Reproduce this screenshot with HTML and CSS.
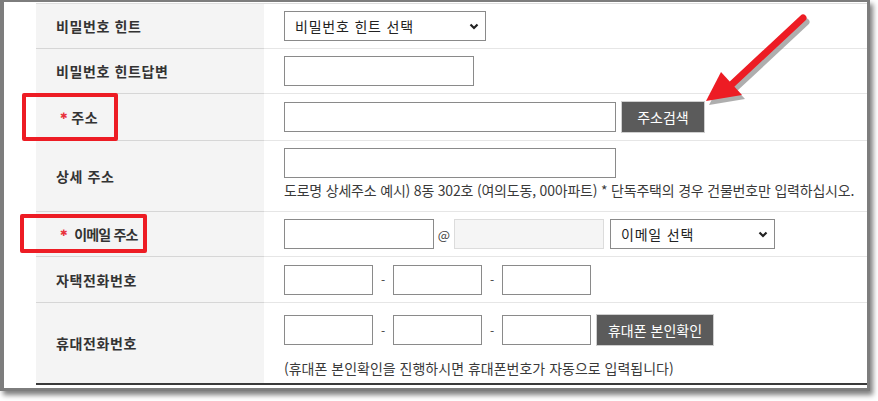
FILE: index.html
```html
<!DOCTYPE html>
<html lang="ko">
<head>
    <meta charset="UTF-8">
    <meta name="viewport" content="width=device-width, initial-scale=1.0">
    <title>회원정보 입력</title>
    <link rel="stylesheet" href="styles.css">
</head>
<body>
    <div class="window">
        <div class="form-table">
            <div class="row">
                <div class="label-cell">비밀번호 힌트</div>
                <div class="value-cell">
                    <div class="line">
                        <span class="select-wrap">
                            <select class="select hint-select">
                                <option>비밀번호 힌트 선택</option>
                            </select>
                            <svg class="chevron" width="10" height="7" viewBox="0 0 10 7"><polyline points="1.5,1.5 5,5 8.5,1.5" fill="none" stroke="#222" stroke-width="2.2"/></svg>
                        </span>
                    </div>
                </div>
            </div>
            <div class="row">
                <div class="label-cell">비밀번호 힌트답변</div>
                <div class="value-cell">
                    <div class="line"><input class="input w-190" type="text"></div>
                </div>
            </div>
            <div class="row row-addr">
                <div class="label-cell"><span class="req">✱</span>주소</div>
                <div class="value-cell">
                    <div class="line">
                        <input class="input w-332" type="text">
                        <button class="btn btn-addr" type="button">주소검색</button>
                    </div>
                </div>
            </div>
            <div class="row row-detail">
                <div class="label-cell">상세 주소</div>
                <div class="value-cell top">
                    <div class="line"><input class="input w-332" type="text"></div>
                    <p class="help help-detail">도로명 상세주소 예시) 8동 302호 (여의도동, 00아파트) * 단독주택의 경우 건물번호만 입력하십시오.</p>
                </div>
            </div>
            <div class="row">
                <div class="label-cell"><span class="req">✱</span><span class="email-label">이메일 주소</span></div>
                <div class="value-cell">
                    <div class="line">
                        <input class="input w-150" type="text">
                        <span class="at">@</span>
                        <input class="input w-150" type="text" disabled>
                        <span class="select-wrap email-wrap">
                            <select class="select email-select">
                                <option>이메일 선택</option>
                            </select>
                            <svg class="chevron" width="10" height="7" viewBox="0 0 10 7"><polyline points="1.5,1.5 5,5 8.5,1.5" fill="none" stroke="#222" stroke-width="2.2"/></svg>
                        </span>
                    </div>
                </div>
            </div>
            <div class="row row-tel">
                <div class="label-cell">자택전화번호</div>
                <div class="value-cell">
                    <div class="line">
                        <input class="input w-89" type="text">
                        <span class="dash">-</span>
                        <input class="input w-89" type="text">
                        <span class="dash">-</span>
                        <input class="input w-89" type="text">
                    </div>
                </div>
            </div>
            <div class="row row-mobile">
                <div class="label-cell">휴대전화번호</div>
                <div class="value-cell top">
                    <div class="line">
                        <input class="input w-89" type="text">
                        <span class="dash">-</span>
                        <input class="input w-89" type="text">
                        <span class="dash">-</span>
                        <input class="input w-89" type="text">
                        <button class="btn btn-phone" type="button">휴대폰 본인확인</button>
                    </div>
                    <p class="help help-mobile">(휴대폰 본인확인을 진행하시면 휴대폰번호가 자동으로 입력됩니다)</p>
                </div>
            </div>
        </div>
    </div>

    <!-- annotations drawn over the capture -->
    <div class="mark mark-addr"></div>
    <div class="mark mark-email"></div>
    <svg class="arrow" width="878" height="401" viewBox="0 0 878 401">
        <g class="arrow-shadow" transform="translate(3 4)">
            <line x1="803" y1="18" x2="730" y2="86" stroke="#7a7a7a" stroke-width="7" stroke-linecap="round"/>
            <polygon points="706,101 721,72 742,95" fill="#7a7a7a"/>
        </g>
        <line x1="803" y1="18" x2="730" y2="86" stroke="#ed1c24" stroke-width="7" stroke-linecap="round"/>
        <polygon points="706,101 721,72 742,95" fill="#ed1c24"/>
    </svg>
</body>
</html>
```

FILE: styles.css
```css
body {
    margin: 0;
    padding: 0;
    background-color: #fff;
    font-family: "Noto Sans CJK KR", "Noto Sans", sans-serif;
    color: #333;
    position: relative;
    width: 878px;
    height: 401px;
    overflow: hidden;
}

.window {
    box-sizing: border-box;
    width: 870px;
    height: 391px;
    border-style: solid;
    border-color: #7d7d7d;
    border-width: 2px 3px 3px 4px;
    background-color: #fff;
    box-shadow: 3px 4px 5px rgba(0, 0, 0, 0.5);
    overflow: hidden;
}

.form-table {
    padding: 1px 0 0 32px;
}

.row {
    box-sizing: border-box;
    display: grid;
    grid-template-columns: 228px 1fr;
    height: 45px;
}

.row:first-child {
    border-top: 1px solid #dedede;
    height: 46px;
}

.row-addr { height: 47px; }
.row-detail { height: 71px; }
.row-tel { height: 46px; }
.row-mobile { height: 82px; }

.label-cell {
    display: flex;
    align-items: center;
    padding-left: 20px;
    background-color: #f4f4f4;
    border-bottom: 1px solid #d6d6d6;
    font-size: 14px;
    font-weight: 700;
    letter-spacing: 0.6px;
    color: #333;
}

.value-cell {
    display: flex;
    flex-direction: column;
    justify-content: center;
    padding: 0 20px;
    border-bottom: 1px solid #e6e6e6;
}

.value-cell.top {
    justify-content: flex-start;
    padding-top: 7px;
}

.row-mobile .label-cell,
.row-mobile .value-cell {
    border-bottom: 2px solid #3a3a3a;
}

.row-mobile .value-cell.top {
    padding-top: 11px;
}

.line {
    display: flex;
    align-items: center;
}

.input {
    box-sizing: border-box;
    height: 30px;
    margin: 0;
    padding: 0 6px;
    border: 1px solid #8a8a8a;
    border-radius: 0;
    background-color: #fff;
    font-family: inherit;
    font-size: 13px;
}

.input:disabled {
    background-color: #f5f5f5;
    border-color: #dcdcdc;
}

.w-89 { width: 89px; }
.w-150 { width: 150px; }
.w-190 { width: 190px; }
.w-332 { width: 332px; }

.select-wrap {
    position: relative;
    display: inline-block;
}

.email-wrap {
    margin-left: 6px;
}

.select {
    box-sizing: border-box;
    appearance: none;
    -webkit-appearance: none;
    height: 30px;
    margin: 0;
    padding: 0 24px 0 10px;
    border: 1px solid #8a8a8a;
    border-radius: 0;
    background-color: #fff;
    font-family: inherit;
    font-size: 14px;
    letter-spacing: 0.8px;
    color: #222;
}

.hint-select { width: 202px; }
.email-select { width: 165px; }

.chevron {
    position: absolute;
    right: 7px;
    top: 12px;
}

.btn {
    box-sizing: border-box;
    height: 32px;
    margin-left: 5px;
    padding: 0;
    border: 1px solid #cfcfcf;
    background-color: #5b5b5b;
    color: #fff;
    font-family: inherit;
    font-size: 14px;
    cursor: pointer;
}

.btn-addr { width: 84px; }
.btn-phone { width: 118px; }

.at {
    width: 20px;
    text-align: center;
    font-size: 13px;
    color: #444;
}

.dash {
    width: 20px;
    text-align: center;
    font-size: 12px;
    color: #444;
}

.help {
    margin: 3px 0 0;
    font-size: 14px;
    line-height: 18px;
    color: #3a3a3a;
    white-space: nowrap;
}

.help-detail {
    letter-spacing: -0.2px;
}

.help-mobile {
    margin-top: 13px;
}

.mark {
    position: absolute;
    box-sizing: border-box;
    border: 4px solid #ed1c24;
    border-radius: 2px;
}

.mark-addr {
    left: 22px;
    top: 93px;
    width: 96px;
    height: 48px;
}

.mark-email {
    left: 20px;
    top: 214px;
    width: 127px;
    height: 39px;
}

.arrow {
    position: absolute;
    left: 0;
    top: 0;
}

.arrow-shadow {
    opacity: 0.6;
}

.req {
    margin: 0 3px 0 4px;
    font-family: "DejaVu Sans", sans-serif;
    font-size: 9px;
    font-weight: 400;
    color: #e8323c;
    position: relative;
    top: -1px;
}

.email-label {
    margin-left: 3px;
    letter-spacing: -0.8px;
}
```
